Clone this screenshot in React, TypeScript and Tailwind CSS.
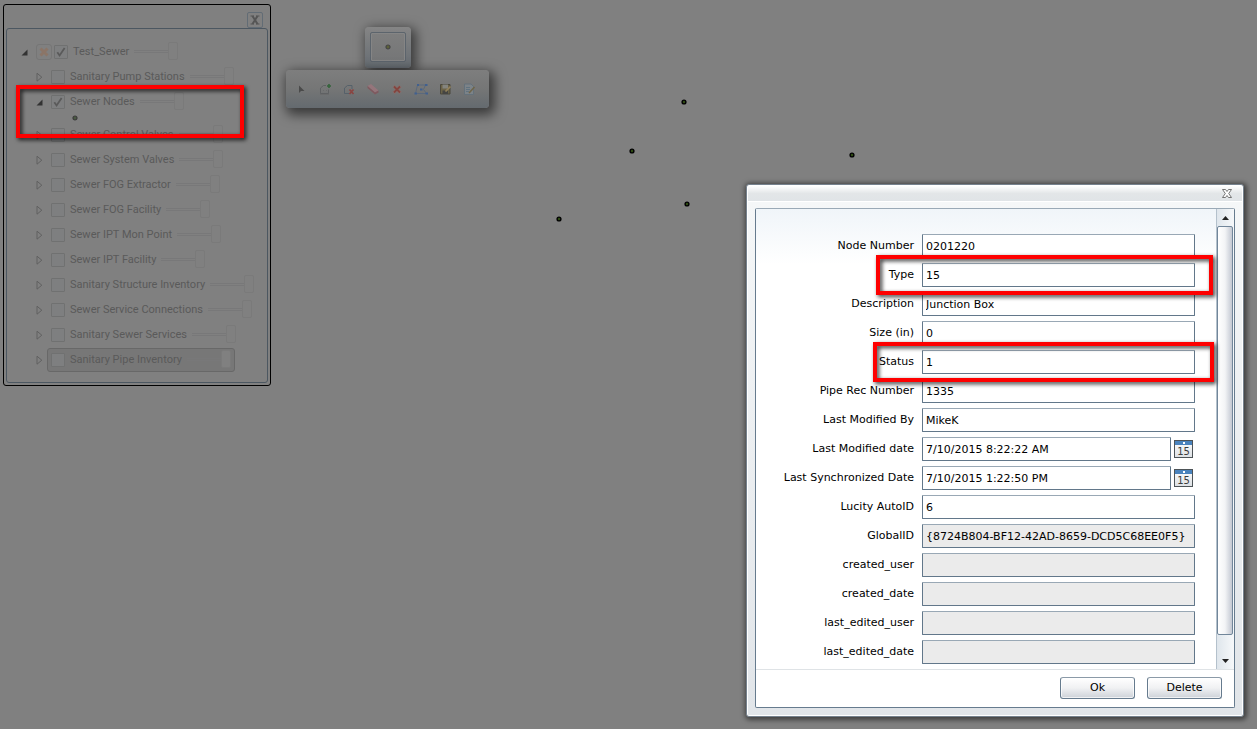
import clsx from 'clsx';

const MAP_NODES = [
  { x: 684, y: 102 },
  { x: 632, y: 151 },
  { x: 852, y: 155 },
  { x: 687, y: 204 },
  { x: 559, y: 219 },
];

const LAYERS = [
  { id: 'pump', name: 'Sanitary Pump Stations' },
  { id: 'nodes', name: 'Sewer Nodes', checked: true, open: true },
  { id: 'control', name: 'Sewer Control Valves' },
  { id: 'system', name: 'Sewer System Valves' },
  { id: 'fog-ext', name: 'Sewer FOG Extractor' },
  { id: 'fog-fac', name: 'Sewer FOG Facility' },
  { id: 'ipt-mon', name: 'Sewer IPT Mon Point' },
  { id: 'ipt-fac', name: 'Sewer IPT Facility' },
  { id: 'structure', name: 'Sanitary Structure Inventory' },
  { id: 'service', name: 'Sewer Service Connections' },
  { id: 'sewer-svc', name: 'Sanitary Sewer Services' },
  { id: 'pipe', name: 'Sanitary Pipe Inventory', selected: true },
];

const FIELDS = [
  { id: 'node', label: 'Node Number', value: '0201220' },
  { id: 'type', label: 'Type', value: '15' },
  { id: 'description', label: 'Description', value: 'Junction Box' },
  { id: 'size', label: 'Size (in)', value: '0' },
  { id: 'status', label: 'Status', value: '1' },
  { id: 'piperec', label: 'Pipe Rec Number', value: '1335' },
  { id: 'modby', label: 'Last Modified By', value: 'MikeK' },
  { id: 'moddate', label: 'Last Modified date', value: '7/10/2015 8:22:22 AM', date: true },
  { id: 'syncdate', label: 'Last Synchronized Date', value: '7/10/2015 1:22:50 PM', date: true },
  { id: 'autoid', label: 'Lucity AutoID', value: '6' },
  { id: 'globalid', label: 'GlobalID', value: '{8724B804-BF12-42AD-8659-DCD5C68EE0F5}', locked: true },
  { id: 'cuser', label: 'created_user', value: '', locked: true },
  { id: 'cdate', label: 'created_date', value: '', locked: true },
  { id: 'euser', label: 'last_edited_user', value: '', locked: true },
  { id: 'edate', label: 'last_edited_date', value: '', locked: true },
];

function NodeDot({ muted = false }: { muted?: boolean }) {
  return (
    <svg width="6" height="6" viewBox="0 0 6 6">
      <circle cx="3" cy="3" r="2" fill={muted ? '#5c6138' : '#4a5a42'} stroke={muted ? '#454545' : '#3a3a3a'} strokeWidth="1.2" />
    </svg>
  );
}

function Expander({ open = false }: { open?: boolean }) {
  return (
    <button type="button" aria-label={open ? 'Collapse' : 'Expand'} className="flex w-[7px] shrink-0 justify-center">
      <svg width="7" height="10" viewBox="0 0 7 10">
        {open ? (
          <path d="M6.500 2.500V8.500H.5z" fill="#333" />
        ) : (
          <path d="M1 1.200v8L5.800 5.200z" fill="none" stroke="#606060" strokeWidth="1" />
        )}
      </svg>
    </button>
  );
}

function LayerCheck({ id, checked = false }: { id: string; checked?: boolean }) {
  return (
    <span className="relative flex size-[14px] shrink-0">
      <input
        id={id}
        type="checkbox"
        defaultChecked={checked}
        className="peer size-[14px] appearance-none rounded-[1px] border border-[#707171] bg-[#7e7f80]"
      />
      <svg viewBox="0 0 14 14" className="pointer-events-none absolute inset-0 hidden size-[14px] peer-checked:block">
        <path d="M3.300 7.200l2.300 3.300 5-7.500" fill="none" stroke="#5a5a5a" strokeWidth="1.800" />
      </svg>
    </span>
  );
}

function OpacitySlider({ name }: { name: string }) {
  return (
    <input
      type="range"
      aria-label={`${name} opacity`}
      defaultValue={100}
      className="h-[18px] w-11 shrink-0 appearance-none bg-transparent [&::-webkit-slider-runnable-track]:h-[3px] [&::-webkit-slider-runnable-track]:border-y [&::-webkit-slider-runnable-track]:border-[#787879] [&::-webkit-slider-thumb]:-mt-[9px] [&::-webkit-slider-thumb]:h-[18px] [&::-webkit-slider-thumb]:w-[10px] [&::-webkit-slider-thumb]:appearance-none [&::-webkit-slider-thumb]:rounded-[2px] [&::-webkit-slider-thumb]:border [&::-webkit-slider-thumb]:border-[#7a7a7a] [&::-webkit-slider-thumb]:bg-[#808080]"
    />
  );
}

function LayerTree() {
  return (
    <aside className="absolute left-[3px] top-1 w-[268px] rounded-[3px] border border-black p-[2px] font-[Roboto,'Liberation_Sans',sans-serif] text-[11px] leading-4 text-[#5a5a5a]">
      <div className="flex h-[21px] items-end justify-end pr-[5px]">
        <button type="button" aria-label="Close" className="flex size-4 items-center justify-center rounded-[2px] border border-[#626c75]">
          <svg width="10" height="10" viewBox="0 0 10 10">
            <path d="M.5 1h3.500M6 1h3.500M.5 9h3.500M6 9h3.500" stroke="#555" strokeWidth="1" fill="none" />
            <path d="M2.500 1l5 8M7.500 1l-5 8" stroke="#555" strokeWidth="2" fill="none" />
          </svg>
        </button>
      </div>
      <div className="rounded-[3px] border border-[#4c5761] py-[10px] pl-[14px] pr-2">
        <div className="flex h-[25px] items-center">
          <Expander open />
          <button type="button" aria-label="Remove" className="ml-2 flex size-4 items-center justify-center rounded-[3px] border border-[#767676]">
            <svg width="10" height="10" viewBox="0 0 10 10">
              <path d="M1.500 1.500l7 7M8.500 1.500l-7 7" stroke="#8b7567" strokeWidth="3" />
            </svg>
          </button>
          <span className="ml-[2px] flex items-center">
            <LayerCheck id="layer-root" checked />
            <label htmlFor="layer-root" className="mx-[5px] whitespace-nowrap">Test_Sewer</label>
            <OpacitySlider name="Test_Sewer" />
          </span>
        </div>
        <ul className="pl-[15px]">
          {LAYERS.map((l) => (
            <li key={l.id}>
              <div className="flex h-[25px] items-center gap-1">
                <Expander open={l.open} />
                <div
                  className={clsx(
                    'flex h-6 items-center rounded-[3px] border px-[3px]',
                    l.selected ? 'border-[#686868] bg-[#777]' : 'border-transparent',
                  )}
                >
                  <LayerCheck id={`layer-${l.id}`} checked={l.checked} />
                  <label htmlFor={`layer-${l.id}`} className="mx-[5px] whitespace-nowrap">{l.name}</label>
                  <OpacitySlider name={l.name} />
                </div>
              </div>
              {l.open && (
                <div className="flex h-2 items-center pl-9">
                  <NodeDot />
                </div>
              )}
            </li>
          ))}
        </ul>
      </div>
    </aside>
  );
}

const TOOLS = [
  {
    name: 'Select',
    icon: <path d="M6 4.500v7.500l2-2h3.500z" fill="#4a4a4a" />,
  },
  {
    name: 'Add to selection',
    icon: (
      <>
        <path d="M3.500 12.500V7l3-2.500H9M3.500 12.500h8V8.500" fill="none" stroke="#5f6163" />
        <path d="M6 9.500h1M9 9.500h1M3 13.500h9" stroke="#6a6b6c" />
        <path d="M12 3v4M10 5h4" stroke="#35643b" strokeWidth="1.600" />
      </>
    ),
  },
  {
    name: 'Remove from selection',
    icon: (
      <>
        <path d="M8 12.500H3.500V7l3-2.500H11V8" fill="none" stroke="#56616a" />
        <path d="M8.500 8.500l4 4.500M12.500 8.500l-4 4.500" stroke="#8a4441" strokeWidth="1.700" />
      </>
    ),
  },
  {
    name: 'Clear selection',
    icon: (
      <>
        <path d="M2.500 5L6 3l7.500 6.500L10 11.500z" fill="#95757b" />
        <path d="M2.500 5v2l7.500 6.500v-2zM10 11.500v2l3.500-2v-2z" fill="#80595f" />
      </>
    ),
  },
  {
    name: 'Delete',
    icon: (
      <>
        <path d="M4.500 5l7 7M11.500 5l-7 7" stroke="#85716f" strokeWidth="3.500" />
        <path d="M5 5.500l6 6M11 5.500l-6 6" stroke="#84453f" strokeWidth="1.800" />
      </>
    ),
  },
  {
    name: 'Edit vertices',
    icon: (
      <>
        <path d="M12.500 4h-8L2.500 12.500h11L10.500 8.500z" fill="none" stroke="#5b697c" />
        <path d="M4 3h2v2H4zM12 3h2.500v2H12zM1.500 11.500h2.500v2H1.500zM12.500 11.500h2.500v2h-2.500zM7 7.500h2.500v2H7z" fill="#41608f" />
      </>
    ),
  },
  {
    name: 'Save',
    icon: (
      <>
        <path d="M3.500 3.500h9.500v9.500H3.500z" fill="#6b6348" stroke="#4b483d" />
        <path d="M5.500 3.500h5.500v4H5.500z" fill="#84847e" />
        <path d="M5.500 9.500h5.500V13H5.500z" fill="#454543" />
        <path d="M8.500 10.500l5-5" stroke="#94825c" strokeWidth="1.700" />
      </>
    ),
  },
  {
    name: 'Attributes',
    icon: (
      <>
        <path d="M3.500 3h6.500l2.500 2.500v8h-9z" fill="#7c8388" stroke="#64717b" />
        <path d="M5 6.500h4M5 8.500h4M5 10.500h3" stroke="#60727f" />
        <path d="M8 12l5.500-6" stroke="#6f6549" strokeWidth="1.600" />
      </>
    ),
  },
];

function EditorTools() {
  return (
    <div className="absolute left-[286px] top-[27px] flex flex-col items-center gap-[2px]">
      <div className="rounded-[4px] bg-linear-to-b from-[#858585] to-[#666c72] px-[5px] pb-[6px] pt-[5px] shadow-[3px_3px_12px_2px_rgba(0,0,0,0.55)]">
        <button type="button" aria-label="Node template" className="flex h-[30px] w-9 items-center justify-center rounded-[2px] border border-[#5c646c] bg-linear-to-b from-[#7e7e7e] to-[#757677] shadow-[inset_0_0_0_1px_#858585]">
          <NodeDot muted />
        </button>
      </div>
      <div className="relative flex h-[38px] items-center gap-2 rounded-[4px] bg-linear-to-b from-[#7e7e7e] via-[#757676] to-[#646a6f] pl-[7px] pr-3 shadow-[3px_4px_12px_3px_rgba(0,0,0,0.55)]">
        {TOOLS.map((t) => (
          <button key={t.name} type="button" aria-label={t.name} className="size-4">
            <svg width="16" height="16" viewBox="0 0 16 16">{t.icon}</svg>
          </button>
        ))}
      </div>
    </div>
  );
}

function CalendarButton({ label }: { label: string }) {
  return (
    <button
      type="button"
      aria-label={`${label} calendar`}
      className="flex h-[18px] w-[19px] shrink-0 flex-col border border-[#4d5357] bg-linear-to-b from-white to-[#dde1e5] text-[10px] leading-[13px] text-[#3c3c3c]"
    >
      <span className="flex h-1 w-full shrink-0 items-center justify-center bg-[#4a83bd]">
        <span className="size-[2px] bg-white" />
      </span>
      <span className="w-full text-center">15</span>
    </button>
  );
}

function AttributeDialog() {
  return (
    <section
      role="dialog"
      aria-label="Attributes"
      className="absolute left-[746px] top-[184px] w-[498px] rounded-[3px] border border-[#76828e] bg-white p-px font-['DejaVu_Sans',Verdana,sans-serif] text-[11px] leading-4 text-black shadow-[1px_1px_5px_2px_rgba(0,0,0,0.5)]"
    >
      <header className="flex h-[15px] items-center justify-end bg-linear-to-b from-white via-[#e3e6e8] to-[#e0e4e7] pr-[10px]">
        <button type="button" aria-label="Close">
          <svg width="10" height="9" viewBox="0 0 10 9" className="block">
            <path d="M.5.500h3L5 2.500 6.500.500h3L6.700 4.500l2.800 4h-3L5 6.500 3.500 8.500h-3l2.800-4z" fill="#fff" stroke="#666" strokeWidth=".9" />
          </svg>
        </button>
      </header>
      <div className="mt-px bg-linear-to-b from-[#f5f7f8] to-[#e1e5e9] px-[7px] pb-[7px] pt-[6px]">
        <div className="overflow-hidden rounded-[2px] border border-[#667b8e] border-t-[#9aa9b6] bg-white">
          <div className="flex border-b border-[#dfe3e6]">
            <form className="flex flex-1 flex-col gap-[5px] bg-linear-to-b from-[#f0f5f9] to-white to-12% pb-[5px] pr-[21px] pt-[25px]">
              {FIELDS.map((f) => (
                <div key={f.id} className="flex h-6 items-center">
                  <label htmlFor={f.id} className="flex-1 pr-2 text-right">{f.label}</label>
                  <div className="flex w-[273px] items-center gap-[3px]">
                    <input
                      id={f.id}
                      type="text"
                      defaultValue={f.value}
                      readOnly={f.locked}
                      className={clsx(
                        'h-6 rounded-[1px] border border-[#62778a] border-t-[#99a8b5] px-[3px] outline-none',
                        f.date ? 'w-[249px]' : 'w-full',
                        f.locked ? 'bg-[#ebebeb]' : 'bg-white',
                      )}
                    />
                    {f.date && <CalendarButton label={f.label} />}
                  </div>
                </div>
              ))}
            </form>
            <div className="flex w-[18px] flex-col border-l border-[#b4c1cc] bg-linear-to-r from-[#dfe6ec] to-[#f6f8fa] pr-px">
              <button type="button" aria-label="Scroll up" className="flex h-[17px] w-full items-center justify-center">
                <svg width="7" height="4" viewBox="0 0 7 4"><path d="M0 4L3.500 0 7 4z" fill="#222" /></svg>
              </button>
              <div className="w-full flex-1 rounded-[2px] border border-[#71869a] bg-linear-to-r from-white via-[#f3f4f6] to-[#c3c8d2]" />
              <button type="button" aria-label="Scroll down" className="mt-[17px] flex h-[17px] w-full items-center justify-center">
                <svg width="7" height="4" viewBox="0 0 7 4"><path d="M0 0h7L3.500 4z" fill="#222" /></svg>
              </button>
            </div>
          </div>
          <footer className="flex justify-end gap-3 pb-2 pr-3 pt-[7px]">
            {['Ok', 'Delete'].map((b) => (
              <button
                key={b}
                type="button"
                className="h-[22px] w-[75px] rounded-[3px] border border-[#667b8e] border-t-[#8b9aa8] bg-linear-to-b from-white via-[#f0f1f3] to-[#cdd2d8] shadow-[inset_0_0_0_1px_rgba(255,255,255,0.7)]"
              >
                {b}
              </button>
            ))}
          </footer>
        </div>
      </div>
    </section>
  );
}

// red call-out frame drawn over whatever needs attention
function Callout({ className }: { className: string }) {
  return (
    <div className={clsx('pointer-events-none absolute border-4 border-[#fe0000] drop-shadow-[2px_2px_2px_rgba(0,0,0,0.8)]', className)} />
  );
}

export default function App() {
  return (
    <main className="relative min-h-screen overflow-hidden bg-[#808080]">
      <svg className="absolute inset-0 h-full w-full">
        {MAP_NODES.map((n) => (
          <circle key={`${n.x}-${n.y}`} cx={n.x} cy={n.y} r="1.900" fill="#2d4a12" stroke="#000" strokeWidth="1.400" />
        ))}
      </svg>
      <LayerTree />
      <EditorTools />
      <AttributeDialog />
      <Callout className="left-4 top-[85px] h-[53px] w-[228px]" />
      <Callout className="left-[876px] top-[255px] h-10 w-[337px]" />
      <Callout className="left-[873px] top-[342px] h-10 w-[341px]" />
    </main>
  );
}
